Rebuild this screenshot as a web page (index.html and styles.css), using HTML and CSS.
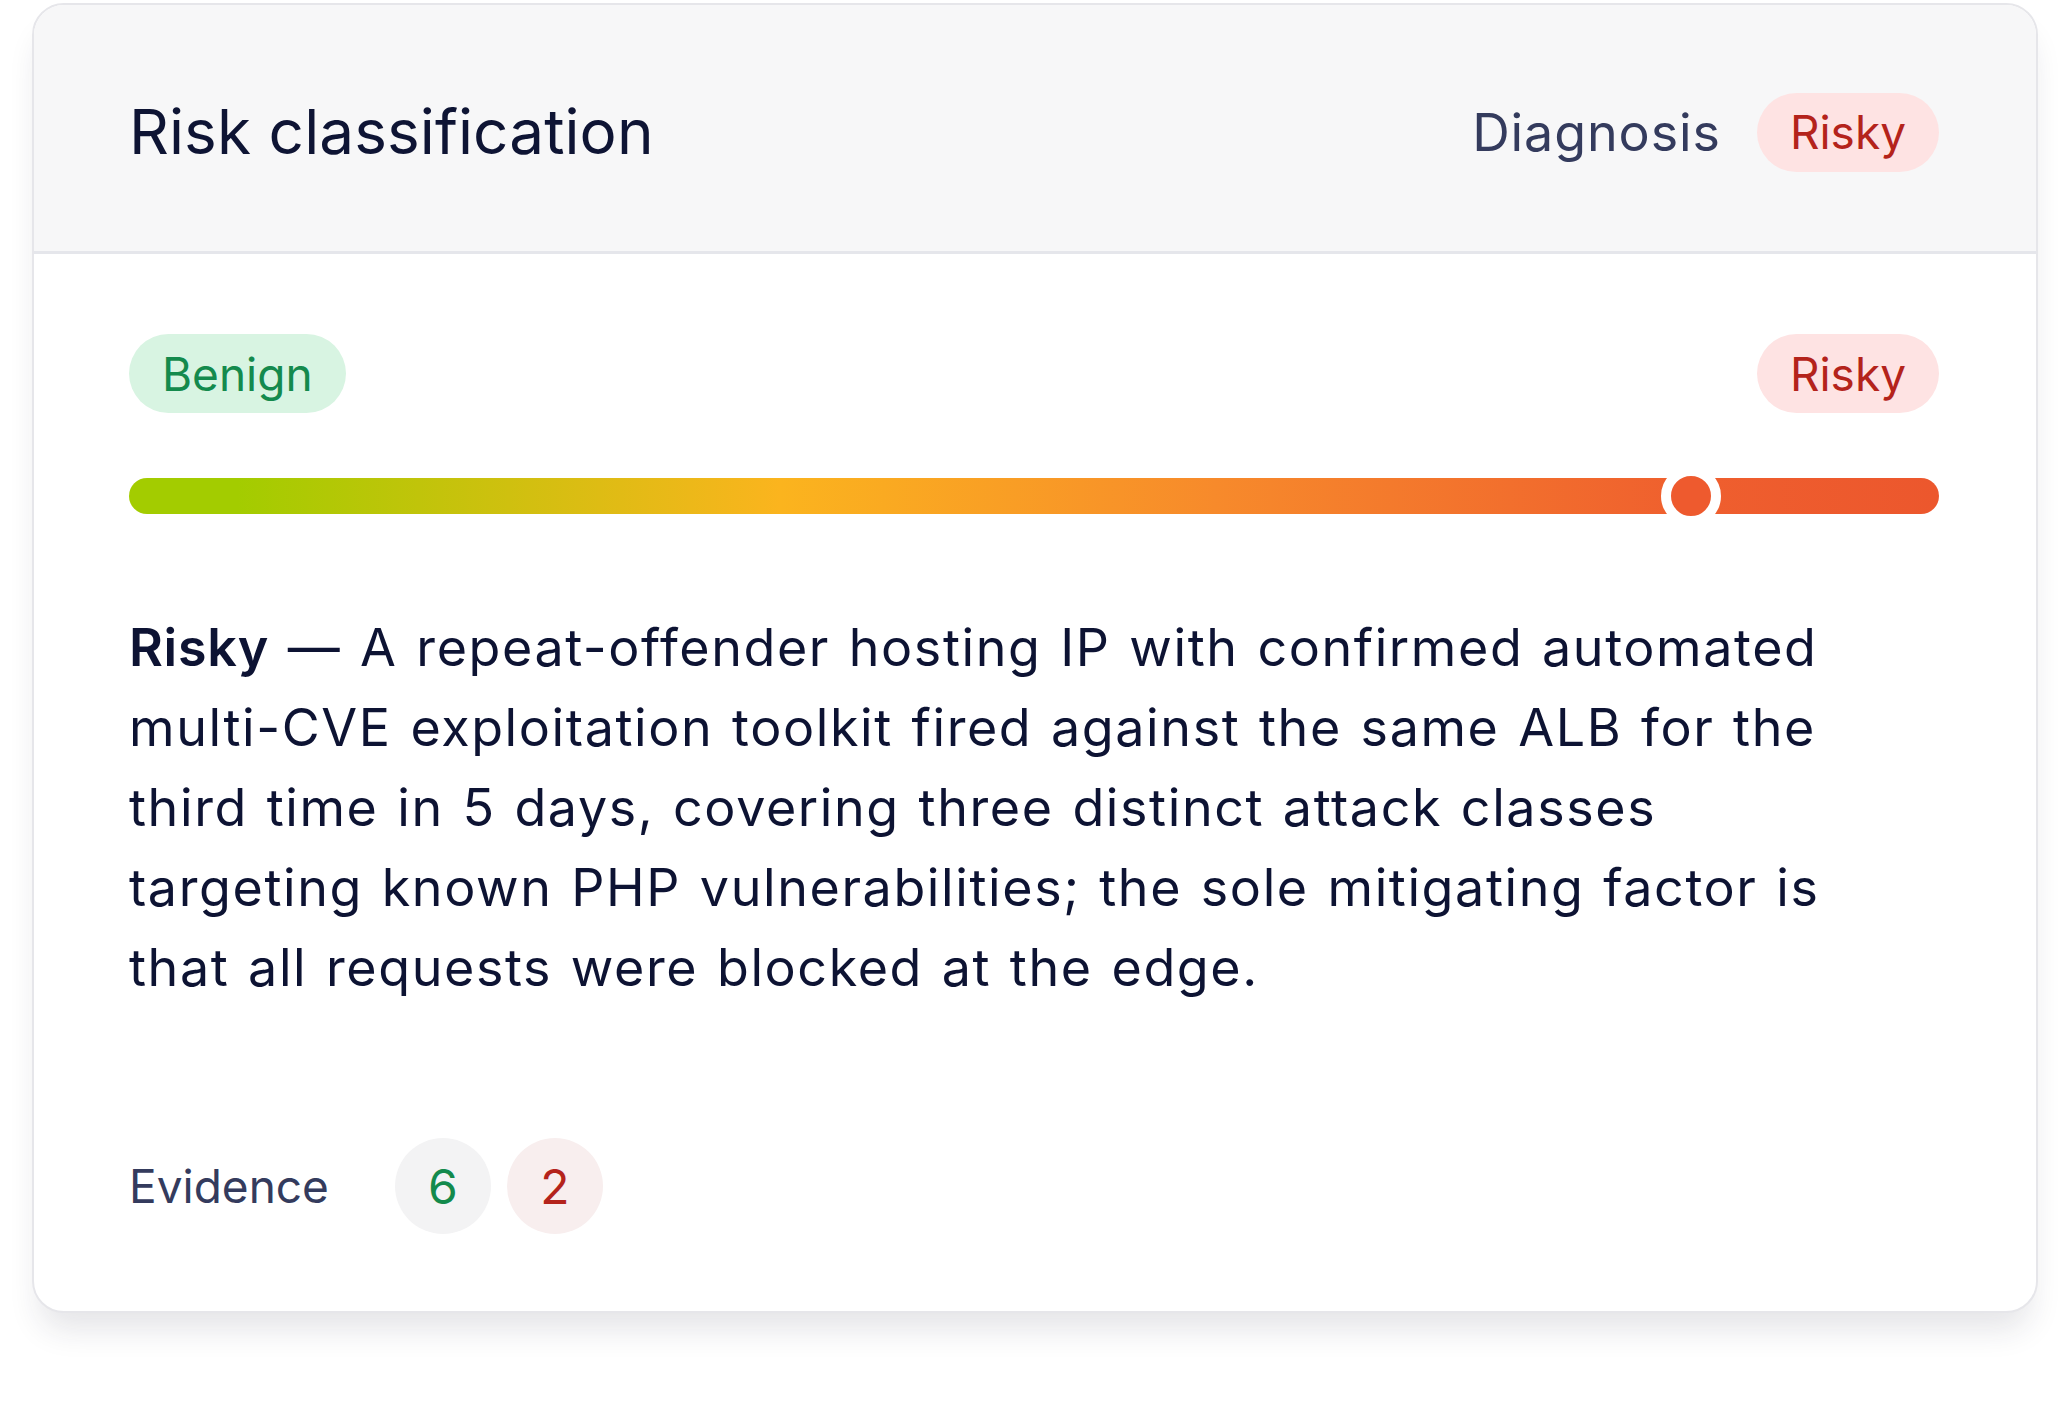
FILE: index.html
```html
<!DOCTYPE html>
<html lang="en">
<head>
<meta charset="utf-8">
<title>Risk classification</title>
<link rel="stylesheet" href="styles.css">
</head>
<body>
<div class="card">
  <div class="card-header">
    <h1 class="title">Risk classification</h1>
    <div class="diagnosis">
      <span class="diag-label">Diagnosis</span>
      <span class="pill pill-risky">Risky</span>
    </div>
  </div>
  <div class="card-body">
    <div class="scale-labels">
      <span class="pill pill-benign">Benign</span>
      <span class="pill pill-risky">Risky</span>
    </div>
    <div class="bar">
      <span class="thumb" style="left: 86.3%"></span>
    </div>
    <p class="summary"><strong>Risky</strong> — A repeat-offender hosting IP with confirmed automated multi-CVE exploitation toolkit fired against the same ALB for the third time in 5 days, covering three distinct attack classes targeting known PHP vulnerabilities; the sole mitigating factor is that all requests were blocked at the edge.</p>
    <div class="evidence">
      <span class="ev-label">Evidence</span>
      <div class="ev-counts">
        <span class="count count-good">6</span>
        <span class="count count-bad">2</span>
      </div>
    </div>
  </div>
</div>
</body>
</html>
```

FILE: styles.css
```css
* { box-sizing: border-box; }
html, body { margin: 0; padding: 0; background: #ffffff; }
body {
  font-family: Inter, "Noto Sans", "Liberation Sans", sans-serif;
  padding: 3px 30px 60px 32px;
}
.card {
  width: 2006px;
  height: 1310px;
  border: 2px solid #e6e6ea;
  border-radius: 32px;
  background: #ffffff;
  box-shadow: 0 24px 32px -8px rgba(30, 30, 60, 0.12);
  overflow: hidden;
  display: flex;
  flex-direction: column;
}
.card-header {
  height: 249px;
  flex: none;
  background: #f7f7f8;
  border-bottom: 3px solid #e5e6eb;
  display: flex;
  align-items: center;
  justify-content: space-between;
  padding: 0 97px 0 95px;
}
.title {
  margin: 0;
  font-size: 62px;
  font-weight: 400;
  color: #0e1434;
  letter-spacing: 0.1px;
  position: relative;
  top: 3px;
}
.diagnosis {
  display: flex;
  align-items: center;
  gap: 36px;
  position: relative;
  top: 4px;
}
.diag-label {
  font-size: 52px;
  letter-spacing: 0.9px;
  color: #343b5d;
}
.pill {
  display: inline-flex;
  align-items: center;
  justify-content: center;
  height: 79px;
  padding: 0 33px;
  border-radius: 40px;
  font-size: 46px;
}
.pill-risky { background: #fee3e3; color: #b4231b; }
.pill-benign { background: #d8f4e2; color: #148a4d; }
.card-body {
  padding: 80px 97px 0 95px;
}
.scale-labels {
  display: flex;
  justify-content: space-between;
}
.bar {
  position: relative;
  margin-top: 65px;
  height: 36px;
  border-radius: 18px;
  background: linear-gradient(90deg, #a3cc00 0%, #a3cc00 6%, #fbb41e 36%, #f78a2b 60%, #ef5f2e 86%, #ec572d 100%);
}
.thumb {
  position: absolute;
  top: 50%;
  width: 60px;
  height: 60px;
  margin: -30px 0 0 -30px;
  border-radius: 50%;
  background: #ee5a2e;
  border: 10px solid #ffffff;
}
.summary {
  margin: 94px 0 0 0;
  max-width: 1740px;
  font-size: 52px;
  letter-spacing: 1.6px;
  word-spacing: 2.5px;
  line-height: 80px;
  color: #0d1333;
}
.summary strong { font-weight: 600; letter-spacing: 0.7px; }
.evidence {
  margin-top: 130px;
  display: flex;
  align-items: center;
  gap: 66px;
}
.ev-label {
  font-size: 46px;
  color: #343b5d;
}
.ev-counts {
  display: flex;
  gap: 16px;
}
.count {
  width: 96px;
  height: 96px;
  border-radius: 50%;
  display: flex;
  align-items: center;
  justify-content: center;
  font-size: 48px;
}
.count-good { background: #f3f3f4; color: #138a4c; }
.count-bad { background: #f8eeee; color: #b4231b; }
```
